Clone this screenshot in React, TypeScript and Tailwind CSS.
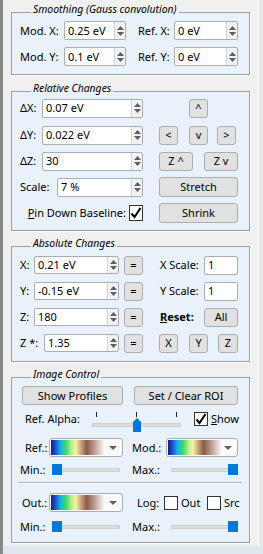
import React from "react";

function Arrows() {
  return (
    <div className="w-[11px] self-stretch border-l border-[#d4d4d4] bg-[#f2f2f2] flex flex-col items-center justify-center gap-[2px]">
      <svg width="7" height="4" viewBox="0 0 7 4">
        <path d="M0 4 L3.5 0 L7 4 Z" fill="#5f5f5f" />
      </svg>
      <svg width="7" height="4" viewBox="0 0 7 4">
        <path d="M0 0 L7 0 L3.5 4 Z" fill="#5f5f5f" />
      </svg>
    </div>
  );
}

function Spin({ cls, v }: { cls: string; v: string }) {
  return (
    <div className={`${cls} flex bg-white border border-[#abadb3] rounded-[2px] overflow-hidden`}>
      <div className="flex-1 flex items-center pl-[3px] whitespace-nowrap">{v}</div>
      <Arrows />
    </div>
  );
}

function Field({ cls, v }: { cls: string; v: string }) {
  return (
    <div className={`${cls} flex items-center bg-white border border-[#abadb3] rounded-[2px] pl-[3px]`}>{v}</div>
  );
}

function Btn({ cls, children }: { cls: string; children: React.ReactNode }) {
  return (
    <button className={`${cls} flex items-center justify-center bg-[#e1e1e1] border border-[#adadad] rounded-[3px] whitespace-nowrap`}>
      {children}
    </button>
  );
}

function Check({ cls, on }: { cls: string; on?: boolean }) {
  return (
    <div className={`${cls} flex items-center justify-center bg-white border border-[#333333]`}>
      {on && (
        <svg width="12" height="12" viewBox="0 0 12 12">
          <path d="M1.5 6.5 L4.5 10 L10.5 1" stroke="#000" strokeWidth="2" fill="none" />
        </svg>
      )}
    </div>
  );
}

function Combo({ cls }: { cls: string }) {
  return (
    <div className={`${cls} h-[19px] flex items-center bg-[#fbfbfb] border border-[#acacac] rounded-[3px] pl-[1px] pr-[5px]`}>
      <div className="w-[54px] h-[15px] bg-[linear-gradient(to_right,#1c1c7a_0%,#1a4fd0_8%,#18b4e8_18%,#3ed86a_28%,#b8f08c_38%,#f4f4a0_46%,#c8a07c_56%,#8a5a48_66%,#c4a49a_82%,#ffffff_100%)]" />
      <div className="flex-1" />
      <svg width="8" height="4" viewBox="0 0 8 4">
        <path d="M0 0 L8 0 L4 4 Z" fill="#606060" />
      </svg>
    </div>
  );
}

function Slider({ cls, right }: { cls: string; right?: boolean }) {
  return (
    <div className={`${cls} relative h-[11px]`}>
      <div className="absolute left-0 right-0 top-[4px] h-[4px] bg-[#dcdcdc] border border-[#d0d0d0]" />
      <div className={`absolute top-0 w-[10px] h-[11px] bg-[#0078d7] ${right ? "right-0" : "left-0"}`} />
    </div>
  );
}

function Group({ title, cls, children }: { title: string; cls: string; children: React.ReactNode }) {
  return (
    <fieldset className={`${cls} border border-[#a0a0a0] bg-[#e9f1fb] pl-[8px] shadow-[1px_1px_0_#ffffff]`}>
      <legend className="ml-[11px] px-[2px] italic font-normal text-[10.4px] leading-[8px] pb-[6px]">{title}</legend>
      {children}
    </fieldset>
  );
}

export default function App() {
  return (
    <div className="w-[263px] h-[554px] flex bg-[#dfe6ef] font-['Noto_Sans',sans-serif] text-[11px] leading-[16px] text-black">
      <div className="w-[3px] h-full bg-[#8a8a8a]" />
      <div className="flex flex-col">
        <div className="flex h-[546px]">
          <div className="w-[255px] bg-[#f0f0f0] px-[8px]">
            <Group title="Smoothing (Gauss convolution)" cls="mt-[5px] pt-[2px] pb-[8px]">
              <div className="flex items-center h-[19px]">
                <span className="w-[44px]">Mod. X:</span>
                <Spin cls="w-[62px] h-[19px]" v="0.25 eV" />
                <span className="ml-[12px] w-[36px]">Ref. X:</span>
                <Spin cls="w-[64px] h-[19px]" v="0 eV" />
              </div>
              <div className="flex items-center h-[19px] mt-[7px]">
                <span className="w-[44px]">Mod. Y:</span>
                <Spin cls="w-[62px] h-[19px]" v="0.1 eV" />
                <span className="ml-[12px] w-[36px]">Ref. Y:</span>
                <Spin cls="w-[64px] h-[19px]" v="0 eV" />
              </div>
            </Group>

            <Group title="Relative Changes" cls="mt-[9px] pb-[7px]">
              <div className="flex items-center h-[20px]">
                <div className="w-[123px] flex items-center">
                  <span className="w-[22px]">ΔX:</span>
                  <Spin cls="w-[101px] h-[19px]" v="0.07 eV" />
                </div>
                <div className="ml-[16px] flex items-center">
                  <Btn cls="ml-[30px] w-[19px] h-[19px]">^</Btn>
                </div>
              </div>
              <div className="flex items-center h-[20px] mt-[7px]">
                <div className="w-[123px] flex items-center">
                  <span className="w-[22px]">ΔY:</span>
                  <Spin cls="w-[101px] h-[19px]" v="0.022 eV" />
                </div>
                <div className="ml-[16px] flex items-center">
                  <Btn cls="w-[19px] h-[19px]">&lt;</Btn>
                  <Btn cls="ml-[11px] w-[19px] h-[19px]">v</Btn>
                  <Btn cls="ml-[9px] w-[19px] h-[19px]">&gt;</Btn>
                </div>
              </div>
              <div className="flex items-center h-[20px] mt-[6px]">
                <div className="w-[123px] flex items-center">
                  <span className="w-[22px]">ΔZ:</span>
                  <Spin cls="w-[101px] h-[19px]" v="30" />
                </div>
                <div className="ml-[16px] flex items-center">
                  <Btn cls="w-[34px] h-[19px]">Z ^</Btn>
                  <Btn cls="ml-[11px] w-[34px] h-[19px]">Z v</Btn>
                </div>
              </div>
              <div className="flex items-center h-[20px] mt-[6px]">
                <div className="w-[123px] flex items-center">
                  <span className="w-[37px]">Scale:</span>
                  <Spin cls="w-[86px] h-[19px]" v="7 %" />
                </div>
                <div className="ml-[16px] flex items-center">
                  <Btn cls="w-[79px] h-[20px]">Stretch</Btn>
                </div>
              </div>
              <div className="flex items-center h-[20px] mt-[6px]">
                <div className="w-[123px] flex items-center justify-end">
                  <span>
                    <span className="underline">P</span>in Down Baseline:
                  </span>
                  <Check cls="ml-[3px] w-[14px] h-[16px]" on />
                </div>
                <div className="ml-[16px] flex items-center">
                  <Btn cls="w-[79px] h-[20px]">Shrink</Btn>
                </div>
              </div>
            </Group>

            <Group title="Absolute Changes" cls="mt-[8px] pt-[2px] pb-[8px]">
              <div className="flex items-center h-[20px]">
                <div className="w-[123px] flex items-center">
                  <span className="w-[14px]">X:</span>
                  <Spin cls="w-[85px] h-[18px]" v="0.21 eV" />
                  <Btn cls="ml-[5px] w-[19px] h-[19px]">=</Btn>
                </div>
                <div className="ml-[16px] flex items-center">
                  <span className="w-[45px] pl-[1px]">X Scale:</span>
                  <Field cls="w-[34px] h-[19px]" v="1" />
                </div>
              </div>
              <div className="flex items-center h-[20px] mt-[6px]">
                <div className="w-[123px] flex items-center">
                  <span className="w-[14px]">Y:</span>
                  <Spin cls="w-[85px] h-[18px]" v="-0.15 eV" />
                  <Btn cls="ml-[5px] w-[19px] h-[19px]">=</Btn>
                </div>
                <div className="ml-[16px] flex items-center">
                  <span className="w-[45px] pl-[1px]">Y Scale:</span>
                  <Field cls="w-[34px] h-[19px]" v="1" />
                </div>
              </div>
              <div className="flex items-center h-[20px] mt-[6px]">
                <div className="w-[123px] flex items-center">
                  <span className="w-[14px]">Z:</span>
                  <Spin cls="w-[85px] h-[18px]" v="180" />
                  <Btn cls="ml-[5px] w-[19px] h-[19px]">=</Btn>
                </div>
                <div className="ml-[16px] flex items-center">
                  <span className="w-[45px] pl-[1px] font-bold">
                    <span className="underline">R</span>eset:
                  </span>
                  <Btn cls="w-[34px] h-[19px]">All</Btn>
                </div>
              </div>
              <div className="flex items-center h-[20px] mt-[6px]">
                <div className="w-[123px] flex items-center">
                  <span className="w-[24px]">Z *:</span>
                  <Spin cls="w-[75px] h-[18px]" v="1.35" />
                  <Btn cls="ml-[5px] w-[19px] h-[19px]">=</Btn>
                </div>
                <div className="ml-[16px] flex items-center">
                  <Btn cls="w-[19px] h-[19px]">X</Btn>
                  <Btn cls="ml-[11px] w-[19px] h-[19px]">Y</Btn>
                  <Btn cls="ml-[10px] w-[20px] h-[19px]">Z</Btn>
                </div>
              </div>
            </Group>

            <Group title="Image Control" cls="mt-[8px] pt-[2px] pb-[9px]">
              <div className="flex items-center h-[19px]">
                <Btn cls="ml-[2px] w-[101px] h-[19px]">Show Profiles</Btn>
                <Btn cls="ml-[11px] w-[104px] h-[19px]">Set / Clear ROI</Btn>
              </div>
              <div className="flex items-start h-[22px] mt-[6px]">
                <span className="w-[72px] pl-[5px]">Ref. Alpha:</span>
                <div className="relative w-[89px] h-[22px]">
                  <div className="absolute left-[4px] top-[1px] w-[1px] h-[5px] bg-[#222222]" />
                  <div className="absolute left-[44px] top-[1px] w-[1px] h-[5px] bg-[#222222]" />
                  <div className="absolute left-[84px] top-[1px] w-[1px] h-[5px] bg-[#222222]" />
                  <div className="absolute left-0 right-0 top-[12px] h-[4px] bg-[#dcdcdc] border border-[#d0d0d0]" />
                  <svg className="absolute left-[41px] top-[7px]" width="8" height="14" viewBox="0 0 8 14">
                    <path d="M0 4 L4 0 L8 4 V14 H0 Z" fill="#0078d7" />
                  </svg>
                </div>
                <Check cls="ml-[13px] mt-[1px] w-[14px] h-[14px]" on />
                <span className="ml-[3px]">
                  <span className="underline">S</span>how
                </span>
              </div>
              <div className="flex items-center h-[19px] mt-[5px]">
                <span className="w-[29px] pl-[5px]">Ref.:</span>
                <Combo cls="w-[74px]" />
                <span className="ml-[9px] w-[34px]">Mod.:</span>
                <Combo cls="w-[72px]" />
              </div>
              <div className="flex items-center h-[13px] mt-[6px]">
                <span className="w-[32px]">Min.:</span>
                <Slider cls="w-[68px]" />
                <span className="ml-[12px] w-[39px]">Max.:</span>
                <Slider cls="w-[67px]" right />
              </div>
              <div className="-ml-[2px] w-[224px] h-[2px] mt-[6px] border-t border-[#b9b9b9] border-b border-b-white" />
              <div className="flex items-center h-[19px] mt-[9px]">
                <span className="w-[29px] pl-[2px]">Out.:</span>
                <Combo cls="w-[74px]" />
                <span className="ml-[14px] w-[27px]">Log:</span>
                <Check cls="w-[14px] h-[14px]" />
                <span className="ml-[3px] w-[26px]">Out</span>
                <Check cls="w-[14px] h-[14px]" />
                <span className="ml-[3px]">Src</span>
              </div>
              <div className="flex items-center h-[13px] mt-[8px]">
                <span className="w-[32px]">Min.:</span>
                <Slider cls="w-[68px]" />
                <span className="ml-[12px] w-[39px]">Max.:</span>
                <Slider cls="w-[67px]" right />
              </div>
            </Group>
          </div>
          <div className="w-[5px] bg-[#e8e8e8] border-l border-white" />
        </div>
        <div className="h-[8px] bg-[#dfe6ef]" />
      </div>
    </div>
  );
}
